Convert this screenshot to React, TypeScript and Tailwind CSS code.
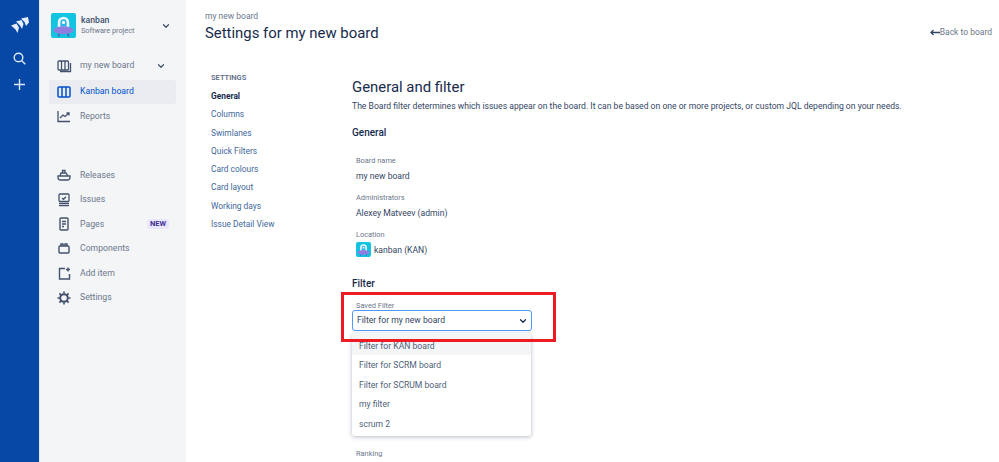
import React from "react";
import { ChevronDown } from "lucide-react";

const FONT = "font-['Roboto','Noto_Sans',sans-serif]";

function ProjectAvatar({ size }: { size: number }) {
  return (
    <svg width={size} height={size} viewBox="0 0 24 24" className="rounded-[2px] shrink-0">
      <rect width="24" height="24" fill="#12c4e0" />
      <path d="M6.500 17V9a5.500 5.500 0 0 1 11 0v8z" fill="#eef6ff" />
      <path d="M9 13V9a3 3 0 0 1 6 0v4z" fill="#2ab6e4" />
      <circle cx="12" cy="9" r="1.500" fill="#fff" />
      <ellipse cx="12" cy="16.500" rx="9.500" ry="3.800" fill="#8f7ee0" />
      <path d="M8 20l-1 2.500M16 20l1 2.500" stroke="#6554c0" strokeWidth="1.500" />
    </svg>
  );
}

function BoardIcon({ color }: { color: string }) {
  return (
    <svg width="14" height="12" viewBox="0 0 14 12" fill="none" stroke={color} strokeWidth="1.500">
      <rect x="1" y="1" width="12" height="10" rx="1" />
      <path d="M5 1v10M9 1v10" />
    </svg>
  );
}

const icons: Record<string, React.ReactNode> = {
  board: (
    <svg width="15" height="13" viewBox="0 0 15 13" fill="none" stroke="#42526e" strokeWidth="1.300">
      <rect x="1" y="1" width="10.500" height="9" rx="1" />
      <path d="M4.500 1v9M8 1v9M13.500 3v8.500H3" />
    </svg>
  ),
  reports: (
    <svg width="14" height="13" viewBox="0 0 14 13" fill="none" stroke="#42526e" strokeWidth="1.300">
      <path d="M1 1v10.500h12" />
      <path d="M3 8l3-3 2 1.500L12 3M9.500 3H12v2.500" />
    </svg>
  ),
  releases: (
    <svg width="14" height="12" viewBox="0 0 14 12" fill="none" stroke="#42526e" strokeWidth="1.300">
      <path d="M1 7h12v1.500a2.500 2.500 0 0 1-2.500 2.500h-7A2.500 2.500 0 0 1 1 8.500zM3 7l1-3h5l2 3M5.500 4V1.500h2.500V4" />
    </svg>
  ),
  issues: (
    <svg width="12" height="14" viewBox="0 0 12 14" fill="none" stroke="#42526e" strokeWidth="1.300">
      <rect x="1" y="1" width="10" height="7.500" rx="1" />
      <path d="M4 5l1.500 1.300L8 3.700M1 10.500h10M1 12.700h10" />
    </svg>
  ),
  pages: (
    <svg width="10" height="14" viewBox="0 0 10 14" fill="none" stroke="#42526e" strokeWidth="1.400">
      <rect x="1" y="1" width="8" height="12" rx="1" />
      <path d="M3 4.500h4M3 7h4M3 9.500h2" />
    </svg>
  ),
  components: (
    <svg width="12" height="11" viewBox="0 0 12 11" fill="none" stroke="#42526e" strokeWidth="1.400">
      <rect x="1" y="3" width="10" height="7" rx="1" />
      <path d="M3 3V1h2v2M7 3V1h2v2" />
    </svg>
  ),
  add: (
    <svg width="13" height="13" viewBox="0 0 13 13" fill="none" stroke="#42526e" strokeWidth="1.400">
      <path d="M7 1.500H1.500v10.500h10V7M10 .5v4M8 2.500h4" />
    </svg>
  ),
  settings: (
    <svg width="14" height="14" viewBox="0 0 14 14" fill="none" stroke="#42526e" strokeWidth="2">
      <circle cx="7" cy="7" r="3.800" />
      <path d="M7 .5v2M7 11.500v2M.5 7h2M11.500 7h2M2.400 2.400l1.400 1.400M10.200 10.200l1.400 1.400M2.400 11.600l1.400-1.400M10.200 3.800l1.400-1.400" strokeWidth="1.700" />
    </svg>
  ),
};

function NavItem({ icon, label, badge }: { icon: string; label: string; badge?: boolean }) {
  return (
    <div className="flex h-[24.500px] items-center text-[8.700px] text-[#6b778c]">
      <span className="flex w-[30px] justify-center">{icons[icon]}</span>
      <span className="ml-[1px] flex-1">{label}</span>
      {badge && (
        <span className="mr-[17px] rounded-[2px] bg-[#eae6ff] px-[3px] text-[7.500px] leading-[10px] font-bold text-[#403294]">
          NEW
        </span>
      )}
    </div>
  );
}

function Field({ label, children }: { label: string; children: React.ReactNode }) {
  return (
    <div className="h-[36px] pl-[4px]">
      <div className="text-[7.400px] leading-[12px] text-[#6b778c]">{label}</div>
      <div className="mt-[2px] text-[8.600px] leading-[14px] text-[#344563]">{children}</div>
    </div>
  );
}

const SETTINGS = ["Columns", "Swimlanes", "Quick Filters", "Card colours", "Card layout", "Working days", "Issue Detail View"];
const FILTERS = ["Filter for SCRM board", "Filter for SCRUM board", "my filter", "scrum 2"];

export default function App() {
  return (
    <div className={`flex h-[462px] w-[999px] overflow-hidden bg-white ${FONT}`}>
      {/* global rail */}
      <div className="flex w-[39px] shrink-0 flex-col items-center bg-[#0747a6] pt-[17px]">
        <svg width="18" height="17" viewBox="0 0 18 17" fill="#e6efff">
          <path d="M0 8.500L5.500 6.500 8 10.500 6.500 16 4.500 12.500z" />
          <path d="M5 4.500L10.500 3 12.500 7 11 12 9 8.500z" />
          <path d="M10 1.500L17 0 18 5.500 15 9 13.500 5z" />
        </svg>
        <svg className="mt-[18px]" width="13" height="13" viewBox="0 0 13 13" fill="none" stroke="#deebff" strokeWidth="1.400">
          <circle cx="5.500" cy="5.500" r="4.300" />
          <path d="M8.700 8.700L12.300 12.300" />
        </svg>
        <svg className="mt-[13px]" width="13" height="13" viewBox="0 0 13 13" fill="none" stroke="#deebff" strokeWidth="1.400">
          <path d="M6.500 1v11M1 6.500h11" />
        </svg>
      </div>

      {/* project sidebar */}
      <div className="w-[147px] shrink-0 border-l border-[#dfe8f5] bg-[#f4f5f7] pt-[13px]">
        <div className="flex items-center pl-[11px] pr-[15px]">
          <ProjectAvatar size={25} />
          <div className="ml-[5px] flex-1">
            <div className="text-[8.700px] leading-[11px] font-medium text-[#42526e]">kanban</div>
            <div className="text-[7.300px] leading-[10px] text-[#6b778c]">Software project</div>
          </div>
          <ChevronDown size={10} strokeWidth={3} className="text-[#42526e]" />
        </div>
        <div className="mt-[15px] flex h-[26px] items-center pl-[9px] pr-[20px] text-[8.700px] text-[#6b778c]">
          <span className="flex w-[30px] justify-center">{icons.board}</span>
          <span className="ml-[1px] flex-1">my new board</span>
          <ChevronDown size={10} strokeWidth={3} className="text-[#42526e]" />
        </div>
        <div className="ml-[9px] mr-[10px] mt-[1px] flex h-[24px] items-center rounded-[3px] bg-[#ebecf0] text-[8.700px] text-[#0052cc]">
          <span className="flex w-[30px] justify-center"><BoardIcon color="#0052cc" /></span>
          <span className="ml-[1px]">Kanban board</span>
        </div>
        <div className="ml-[9px]">
          <NavItem icon="reports" label="Reports" />
        </div>
        <div className="ml-[9px] mt-[34.500px]">
          <NavItem icon="releases" label="Releases" />
          <NavItem icon="issues" label="Issues" />
          <NavItem icon="pages" label="Pages" badge />
          <NavItem icon="components" label="Components" />
          <NavItem icon="add" label="Add item" />
          <NavItem icon="settings" label="Settings" />
        </div>
      </div>

      {/* main */}
      <div className="relative flex-1 pl-[19px]">
        <div className="flex items-start justify-between pr-[7px] pt-[10px]">
          <div>
            <div className="text-[8.500px] leading-[12px] text-[#6b778c]">my new board</div>
            <h1 className="mt-[1px] text-[14.900px] leading-[20px] font-normal text-[#172b4d]">Settings for my new board</h1>
          </div>
          <div className="mt-[16px] flex items-center text-[8.500px] text-[#6b778c]">
            <svg width="10" height="7" viewBox="0 0 10 7" fill="none" stroke="#344563" strokeWidth="1.300">
              <path d="M10 3.500H1M3.500 1L1 3.500 3.500 6" />
            </svg>
            <span>Back to board</span>
          </div>
        </div>

        <div className="mt-[29px] flex">
          <div className="w-[147px] shrink-0 pl-[6px]">
            <div className="text-[7.500px] leading-[12px] font-semibold text-[#5e6c84]">SETTINGS</div>
            <div className="mt-[3px] text-[8.400px] leading-[18.300px] font-bold text-[#172b4d]">General</div>
            {SETTINGS.map((s) => (
              <div key={s} className="text-[8.400px] leading-[18.300px] text-[#42689b]">{s}</div>
            ))}
          </div>
          <div className="flex-1 pt-[5px]">
            <h2 className="text-[14.900px] leading-[20px] font-normal text-[#172b4d]">General and filter</h2>
            <p className="mt-[3px] text-[8.600px] leading-[12px] text-[#344563]">
              The Board filter determines which issues appear on the board. It can be based on one or more projects, or custom JQL depending on your needs.
            </p>
            <h3 className="mt-[14px] text-[10px] leading-[14px] font-medium text-[#172b4d]">General</h3>
            <div className="mt-[15px] flex flex-col gap-[1px]">
              <Field label="Board name">my new board</Field>
              <Field label="Administrators">Alexey Matveev (admin)</Field>
              <Field label="Location">
                <span className="-mt-[1px] flex items-center gap-[3px]">
                  <ProjectAvatar size={15} />
                  kanban (KAN)
                </span>
              </Field>
            </div>
            <h3 className="mt-[12px] text-[10px] leading-[14px] font-medium text-[#172b4d]">Filter</h3>
            <div className="mt-[10px] pl-[4px] text-[7.400px] leading-[9px] text-[#6b778c]">Saved Filter</div>
            <div className="flex h-[21px] w-[180px] items-center justify-between rounded-[3px] border border-[#4c9aff] bg-white pl-[4px] pr-[3px] text-[8.600px] text-[#344563]">
              Filter for my new board
              <ChevronDown size={10} strokeWidth={3} className="text-[#172b4d]" />
            </div>
            <div className="pl-[4px] text-[7.400px] leading-[10px] text-[#4c9aff]">Edit Filter Query</div>
            <div className="mt-[108px] pl-[4px] text-[7.400px] leading-[10px] text-[#6b778c]">Ranking</div>
          </div>
        </div>

        {/* open dropdown */}
        <div className="absolute left-[166px] top-[333px] w-[179px] rounded-[3px] bg-white shadow-[0_1px_4px_rgba(9,30,66,0.3)]">
          <div className="flex h-[22px] items-center bg-[#f4f5f7] pl-[7px] pt-[4px] text-[8.600px] text-[#505f79]">Filter for KAN board</div>
          <div className="h-[1px]" />
          {FILTERS.map((f) => (
            <div key={f} className="flex h-[19.500px] items-center pl-[7px] text-[8.600px] text-[#505f79]">{f}</div>
          ))}
          <div className="h-[2px]" />
        </div>

        {/* red highlight drawn on the screenshot */}
        <div className="absolute left-[155px] top-[292px] h-[49.500px] w-[215px] border-[3px] border-[#ed1c24]" />
      </div>
    </div>
  );
}
